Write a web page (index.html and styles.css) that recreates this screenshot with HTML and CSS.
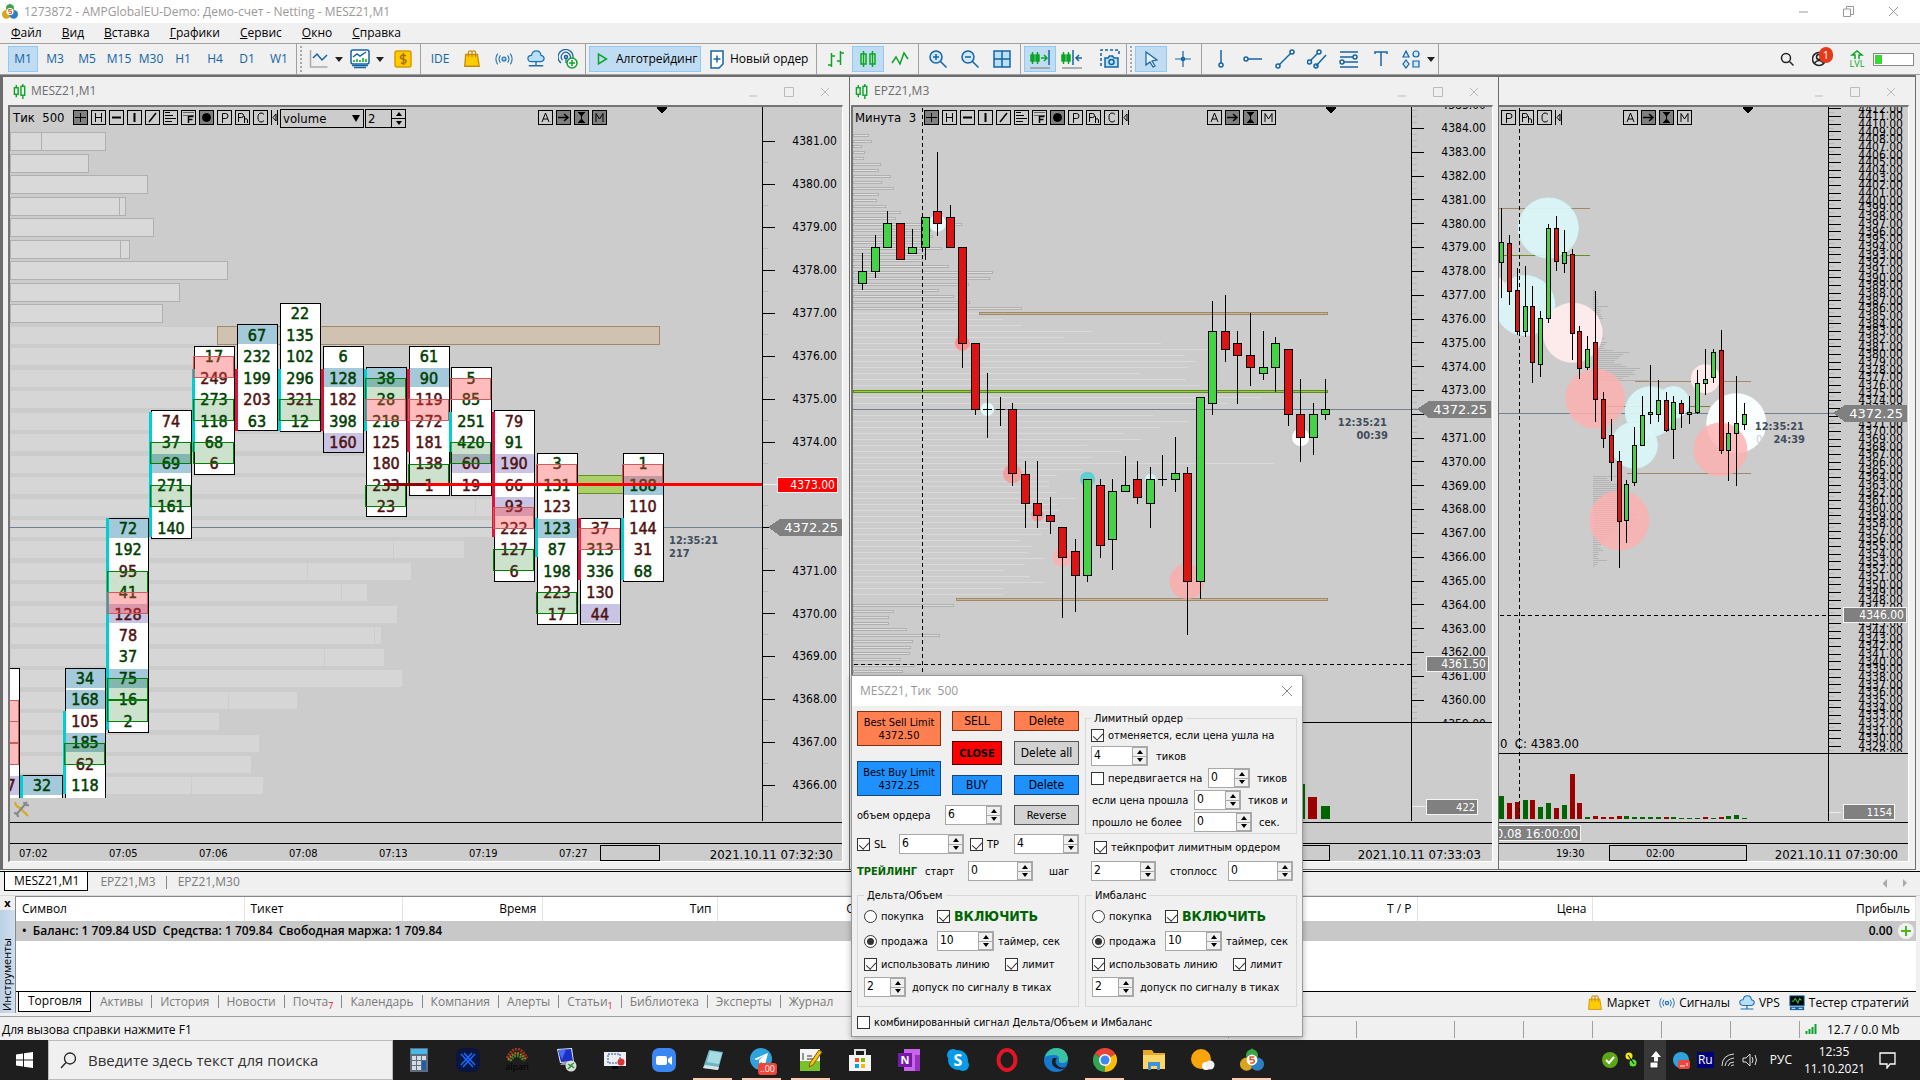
FILE: index.html
```html
<!DOCTYPE html>
<html lang="ru">
<head>
<meta charset="utf-8">
<title>1273872 - AMPGlobalEU-Demo</title>
<link rel="stylesheet" href="styles.css">
</head>
<body>
<svg class="defs" aria-hidden="true">
  <symbol id="i-mt" viewBox="0 0 20 20"><path d="M10 0l3 4h-6z" fill="#2e9b3e"/><circle cx="10" cy="6" r="5" fill="#3aa548"/><circle cx="5.500" cy="13.500" r="5.500" fill="#d9a520"/><circle cx="14.500" cy="13.500" r="5.500" fill="#2f7fc4"/><circle cx="10" cy="10" r="4.500" fill="#fff"/><path d="M12 7.500H8.500v2.200q3.500-.6 3.500 1.400 0 1.800-3.500 1.200" fill="none" stroke="#e0591c" stroke-width="1.300"/></symbol>
  <symbol id="i-candles" viewBox="0 0 16 16"><g fill="none" stroke="#0aa528" stroke-width="1.500"><path d="M3.500 1v3M3.500 11v3M10.500 0v2M10.500 12v4"/><rect x="1.500" y="4" width="4" height="7"/><rect x="8.500" y="2.500" width="4" height="9.500"/></g></symbol>
  <symbol id="i-bag" viewBox="0 0 20 20"><path d="M3 5h13l2 13H2z" fill="#fc0" stroke="#c78a00"/><path d="M6 8V3q0-2 2-2t2 2v5M10 8V3q0-2 2-2t2 2v5" fill="none" stroke="#c78a00" stroke-width="1.300"/></symbol>
  <symbol id="i-sig" viewBox="0 0 20 20"><circle cx="10" cy="10" r="2.200" fill="#9bd0f5" stroke="#1f6fb2" stroke-width="1.300"/><path d="M6 6q-3 4 0 8M14 6q3 4 0 8M3 4q-4 6 0 12M17 4q4 6 0 12" fill="none" stroke="#1f6fb2" stroke-width="1.200"/></symbol>
  <symbol id="i-cloud" viewBox="0 0 20 20"><path d="M5 13q-4 0-4-3.500T5 6q1-5 5.500-5T15.500 6q3.500.5 3.500 3.500T15.500 13z" fill="#b8e0fa" stroke="#1f6fb2" stroke-width="1.300"/><path d="M10 13v4M2 17.500h16" stroke="#1f6fb2" stroke-width="1.500"/></symbol>
  <symbol id="i-tester" viewBox="0 0 18 18"><rect x="1" y="1" width="16" height="11" fill="#000" stroke="#1464a5"/><path d="M3 7h2l2-3 3 5 2-5 2 2" fill="none" stroke="#28c840" stroke-width="1.200"/><rect x="1" y="13" width="16" height="4" fill="#1464a5"/><path d="M3 15h4M11 15h4" stroke="#fff"/></symbol>
</svg>

<header class="titlebar">
  <svg class="app-icon"><use href="#i-mt"/></svg>
  <span>1273872 - AMPGlobalEU-Demo: Демо-счет - Netting - MESZ21,M1</span>
  <div class="caption-buttons">
    <button aria-label="Свернуть"><svg width="12" height="12"><path d="M1 6h9"/></svg></button>
    <button aria-label="Восстановить"><svg width="12" height="12"><path d="M3.500 3V.5h7v8H8M.5 3h7v7.500h-7z"/></svg></button>
    <button aria-label="Закрыть"><svg width="12" height="12"><path d="M1 1l9 9M10 1l-9 9"/></svg></button>
  </div>
</header>
<nav class="menubar">
  <a href="#"><u>Ф</u>айл</a><a href="#"><u>В</u>ид</a><a href="#"><u>В</u>ставка</a><a href="#"><u>Г</u>рафики</a><a href="#"><u>С</u>ервис</a><a href="#"><u>О</u>кно</a><a href="#"><u>С</u>правка</a>
</nav>

<div class="toolbar">
  <div class="frames"><button class="on">M1</button><button>M3</button><button>M5</button><button>M15</button><button>M30</button><button>H1</button><button>H4</button><button>D1</button><button>W1</button></div>
  <i class="sep"></i><i class="grip"></i>
  <button class="tool wide" aria-label="График"><svg width="20" height="20"><path d="M1.500 1v17h17" stroke="#aaa"/><path d="M4 9l4-4 5 6 5-5"/></svg><i class="caret"></i></button>
  <button class="tool wide" aria-label="Индикаторы"><svg width="20" height="20"><rect x="1" y="1" width="18" height="14" rx="2" fill="#fff"/><path d="M3 8l4-3 3 2 6-4"/><path d="M4 13v-2M7 13v-3M10 13v-2M13 13v-4M16 13v-3" stroke="#0aa528"/><path d="M2 16.500h16M4 18.500h12"/></svg><i class="caret"></i></button>
  <button class="tool" aria-label="Баланс"><svg width="20" height="20"><rect x="2" y="2" width="16" height="16" rx="2" fill="#fc0" stroke="#d99a00"/><path d="M13 7q-3-2-5 0t2 3 3 3-5 1M10.500 4v12" stroke="#a86c00"/></svg></button>
  <i class="sep"></i>
  <button class="tool blue">IDE</button>
  <button class="tool" aria-label="Маркет"><svg width="18" height="18"><use href="#i-bag"/></svg></button>
  <button class="tool" aria-label="Сигналы"><svg width="18" height="18"><use href="#i-sig"/></svg></button>
  <button class="tool" aria-label="VPS"><svg width="18" height="18"><use href="#i-cloud"/></svg></button>
  <button class="tool" aria-label="Копирование"><svg width="20" height="20"><circle cx="8" cy="8" r="1.500"/><path d="M8 10v4M4.500 11a4.500 4.500 0 1 1 7-.5M3 14a7.500 7.500 0 1 1 12-5" stroke-width="1.200"/><circle cx="14" cy="14" r="5" fill="#fff" stroke="#0aa528"/><path d="M14 11v6M11 14h6" stroke="#0aa528"/></svg></button>
  <i class="sep"></i>
  <button class="labelled on algo"><svg width="12" height="14"><path d="M1.500 2v10l8-5z" stroke="#0aa528"/></svg>Алготрейдинг</button>
  <button class="labelled order"><svg width="15" height="19"><path d="M1 1h12v13l-4 4H1z" fill="#fff"/><path d="M3.500 9h7M7 5.500v7"/></svg>Новый ордер</button>
  <i class="sep"></i>
  <button class="tool" aria-label="Бары"><svg width="20" height="20"><path d="M5.500 4v14M2 16h3.500M5.500 7H9M14.500 2v14M11 12h3.500M14.500 4H18" stroke="#0aa528"/></svg></button>
  <button class="tool on" aria-label="Свечи"><svg width="20" height="20"><path d="M5.500 2v16M14.500 2v16M3 5h5v10H3zM12 5h5v10h-5z" stroke="#0aa528" fill="#cdeccf"/></svg></button>
  <button class="tool" aria-label="Линия"><svg width="20" height="20"><path d="M2 14l4-6 4 7 4-11 4 6" stroke="#0aa528"/></svg></button>
  <i class="sep"></i>
  <button class="tool" aria-label="Увеличить"><svg width="20" height="20"><circle cx="8" cy="8" r="6" fill="#cfe8fb"/><path d="M12.500 12.500l6 6M5 8h6M8 5v6"/></svg></button>
  <button class="tool" aria-label="Уменьшить"><svg width="20" height="20"><circle cx="8" cy="8" r="6" fill="#cfe8fb"/><path d="M12.500 12.500l6 6M5 8h6"/></svg></button>
  <button class="tool" aria-label="Сетка окон"><svg width="20" height="20"><path d="M2 2h16v16H2zM10 2v16M2 10h16" fill="#b8e0fa"/></svg></button>
  <i class="sep"></i>
  <button class="tool on" aria-label="Автопрокрутка"><svg width="22" height="20"><path d="M3.500 3v12M8.500 3v12M2 6h3v6H2zM7 6h3v6H7zM12 9h5M15 6l3 3-3 3" stroke="#0aa528"/><path d="M20 1v15"/><path d="M1 19h20" stroke="#999"/></svg></button>
  <button class="tool" aria-label="Сдвиг графика"><svg width="22" height="20"><path d="M2.500 3v12M7.500 3v12M1 6h3v6H1zM6 6h3v6H6z" stroke="#0aa528"/><path d="M12 1v15M21 9h-6M18 6l-3 3 3 3"/><path d="M1 19h20" stroke="#999"/></svg></button>
  <button class="tool shot" aria-label="Снимок"><svg width="20" height="20"><path d="M1 17V1h18v5" stroke-dasharray="3 2"/><path d="M5 9h3l1.500-2h3L14 9h4v9H5z" fill="#b8e0fa"/><circle cx="11.500" cy="13" r="2.500"/></svg></button>
  <i class="sep tight"></i><i class="grip"></i>
  <button class="tool on" aria-label="Курсор"><svg width="20" height="20"><path d="M5 3l11 8-5 1 3 5-2 1-3-5-4 3z" fill="#e6f4fe" stroke-width="1.200"/></svg></button>
  <button class="tool" aria-label="Перекрестие"><svg width="20" height="20"><path d="M10 2v16M2 10h16" stroke-width="1.200"/><circle cx="10" cy="10" r="1.500"/></svg></button>
  <i class="sep"></i>
  <button class="tool" aria-label="Вертикальная линия"><svg width="20" height="20"><path d="M10 1v13"/><circle cx="10" cy="16" r="2"/></svg></button>
  <button class="tool" aria-label="Горизонтальная линия"><svg width="20" height="20"><path d="M5 10h14"/><circle cx="3" cy="10" r="2"/></svg></button>
  <button class="tool" aria-label="Трендовая линия"><svg width="20" height="20"><path d="M4 16L16 4"/><circle cx="3" cy="17" r="2"/><circle cx="17" cy="3" r="2"/></svg></button>
  <button class="tool" aria-label="Канал"><svg width="20" height="20"><path d="M3 12l8-8M9 17L19 6"/><circle cx="2.500" cy="13" r="2"/><circle cx="12" cy="3" r="2"/><circle cx="9" cy="17" r="2"/></svg></button>
  <button class="tool" aria-label="Фибоначчи"><svg width="20" height="20"><path d="M1 3h18M1 8h13M5 13h14M1 18h18"/><circle cx="16" cy="8" r="2"/><circle cx="3" cy="13" r="2"/></svg></button>
  <button class="tool" aria-label="Текст"><svg width="20" height="20"><path d="M4 5V3h12v2M10 3v14"/></svg></button>
  <button class="tool wide" aria-label="Объекты"><svg width="20" height="20"><path d="M5 2l3 6H2zM5 11l3 4-3 4-3-4zM12 12h6v6h-6z" fill="#cfe8fb" stroke-width="1.200"/><circle cx="15" cy="5" r="3" fill="#cfe8fb" stroke-width="1.200"/></svg><i class="caret"></i></button>
  <i class="sep tight"></i>
  <div class="tool-right">
    <svg width="15" height="15"><path d="M9.500 9.500l4 4" stroke="#222"/><circle cx="6" cy="6" r="4.500" stroke="#222"/></svg>
    <span class="user"><svg width="16" height="16"><circle cx="7" cy="8" r="6.500" stroke="#222"/><circle cx="7" cy="6" r="2.500" stroke="#222"/><path d="M2.500 12q4.500-5 9 0" stroke="#222"/></svg><b>1</b></span>
    <span class="lvl"><svg width="14" height="10"><path d="M5 9V5H2l5-4 5 4H9v4" stroke="#0aa528"/></svg>LVL</span>
    <span class="battery"><i></i></span>
  </div>
</div>

<main class="mdi">
  <section class="win win1">
    <header><svg width="15" height="15"><use href="#i-candles"/></svg><span>MESZ21,M1</span><div class="win-buttons"><button aria-label="Свернуть"><svg width="10" height="10"><path d="M1 9h8"/></svg></button><button aria-label="Развернуть"><svg width="10" height="10"><path d="M.5.5h9v9h-9z"/></svg></button><button aria-label="Закрыть"><svg width="10" height="10"><path d="M1 1l8 8M9 1L1 9"/></svg></button></div></header>
    <div class="frame"><svg class="chart" id="chart1"></svg>
      <div class="tools"><span class="period">Тик&nbsp; 500</span><span class="set" data-set="all"></span>
        <label class="pick"><select aria-label="Тип"><option>volume</option></select></label>
        <span class="spin flat"><input aria-label="Шаг" value="2"><span><button aria-label="Больше"></button><button aria-label="Меньше"></button></span></span></div>
      <div class="tools modes" data-set="modes"></div></div>
  </section>
  <section class="win win2">
    <header><svg width="15" height="15"><use href="#i-candles"/></svg><span>EPZ21,M3</span><div class="win-buttons"><button aria-label="Свернуть"><svg width="10" height="10"><path d="M1 9h8"/></svg></button><button aria-label="Развернуть"><svg width="10" height="10"><path d="M.5.5h9v9h-9z"/></svg></button><button aria-label="Закрыть"><svg width="10" height="10"><path d="M1 1l8 8M9 1L1 9"/></svg></button></div></header>
    <div class="frame"><svg class="chart" id="chart2"></svg>
      <div class="tools"><span class="period">Минута&nbsp; 3</span><span class="set" data-set="all"></span></div>
      <div class="tools modes" data-set="modes"></div></div>
  </section>
  <section class="win win3">
    <header><div class="win-buttons"><button aria-label="Свернуть"><svg width="10" height="10"><path d="M1 9h8"/></svg></button><button aria-label="Развернуть"><svg width="10" height="10"><path d="M.5.5h9v9h-9z"/></svg></button><button aria-label="Закрыть"><svg width="10" height="10"><path d="M1 1l8 8M9 1L1 9"/></svg></button></div></header>
    <div class="frame"><svg class="chart" id="chart3"></svg>
      <div class="tools" data-set="tail"></div>
      <div class="tools modes" data-set="modes"></div></div>
  </section>
</main>

<nav class="doc-tabs"><a class="active" href="#">MESZ21,M1</a><a href="#">EPZ21,M3</a><a href="#">EPZ21,M30</a><span class="arrows"><i class="left"></i><i class="right"></i></span></nav>

<section class="toolbox">
  <div class="side"><button aria-label="Закрыть">x</button><span>Инструменты</span></div>
  <div class="pane">
    <table>
      <colgroup><col class="c-sym"><col class="c-tick"><col class="c-time"><col class="c-std"><col class="c-std"><col class="c-std"><col class="c-std"><col class="c-std"><col class="c-std"><col></colgroup>
      <thead><tr><th class="l">Символ</th><th class="l">Тикет</th><th>Время</th><th>Тип</th><th>Объем</th><th>Цена</th><th>S / L</th><th>T / P</th><th>Цена</th><th>Прибыль</th></tr></thead>
      <tbody><tr><td class="l" colspan="8">•&nbsp; Баланс: 1 709.84 USD&nbsp; Средства: 1 709.84&nbsp; Свободная маржа: 1 709.84</td><td></td><td><span class="profit">0.00<svg width="16" height="16"><circle cx="8" cy="8" r="8" fill="#f2f2f2"/><path d="M8 3v10M3 8h10" stroke="#4db81e" stroke-width="2"/></svg></span></td></tr></tbody>
    </table>
    <nav class="box-tabs">
      <a class="active" href="#">Торговля</a><a href="#">Активы</a><a href="#">История</a><a href="#">Новости</a><a href="#">Почта<sub>7</sub></a><a href="#">Календарь</a><a href="#">Компания</a><a href="#">Алерты</a><a href="#">Статьи<sub>1</sub></a><a href="#">Библиотека</a><a href="#">Эксперты</a><a href="#">Журнал</a>
      <span class="services"><a href="#"><svg width="16" height="16"><use href="#i-bag"/></svg>Маркет</a><a href="#"><svg width="16" height="16"><use href="#i-sig"/></svg>Сигналы</a><a href="#"><svg width="16" height="16"><use href="#i-cloud"/></svg>VPS</a><a href="#"><svg width="16" height="16"><use href="#i-tester"/></svg>Тестер стратегий</a></span>
    </nav>
  </div>
</section>

<footer class="status"><span class="help">Для вызова справки нажмите F1</span><i class="s1"></i><i class="s2"></i><i class="s3"></i><i class="s3"></i><i class="s3"></i><i class="s3"></i><i class="s3"></i><span class="net"><svg width="14" height="14"><path d="M1.500 10v3M4.500 8v5M7.500 6v7M10.500 3v10" stroke="#0aa528" stroke-width="2"/></svg>12.7 / 0.0 Mb</span></footer>

<section class="taskbar">
  <button class="start" aria-label="Пуск"><svg width="17" height="16"><path d="M0 2.500l7-1v6H0zM8 1.300L17 0v7.500H8zM0 8.500h7v6l-7-1zM8 8.500h9V16l-9-1.300z" fill="#fff"/></svg></button>
  <label class="search"><svg width="17" height="17"><circle cx="10" cy="6.500" r="5.500" fill="none" stroke="#222" stroke-width="1.300"/><path d="M6 10.500L1 16" stroke="#222" stroke-width="1.300"/></svg><input aria-label="Поиск" placeholder="Введите здесь текст для поиска"></label>
  <div class="apps">
    <button aria-label="Калькулятор"><svg width="24" height="24"><rect x="3" y="0" width="18" height="24" fill="#5f6d7c"/><rect x="4" y="1" width="16" height="5" fill="#45b9ea"/><path d="M5 8h4v4H5zM10 8h4v4h-4zM15 8h4v4h-4zM5 13h4v4H5zM10 13h4v4h-4zM5 18h4v4H5zM10 18h4v4h-4z" fill="#d5dce4"/><path d="M15 13h4v9h-4z" fill="#1d5fa8"/></svg></button>
    <button aria-label="X"><svg width="24" height="24"><rect width="24" height="24" rx="7" fill="#0a1640"/><path d="M5 6l12 13M19 6L7 19M8 5l11 12M16 5L5 17" stroke="#1769ff" stroke-width="1.500"/></svg></button>
    <button aria-label="Alpari"><svg width="26" height="24"><path d="M3 10Q13-8 23 10" fill="none" stroke="#a03325" stroke-width="3" stroke-dasharray="2 1"/><path d="M4 12Q13-2 22 12" fill="none" stroke="#b0701c" stroke-width="2" stroke-dasharray="2 1"/><path d="M6 13Q13 2 20 13" fill="none" stroke="#4a8428" stroke-width="3" stroke-dasharray="2 1"/><text x="13" y="22" font-size="9" text-anchor="middle" fill="#000">alpari</text></svg></button>
    <button aria-label="Удаленный рабочий стол"><svg width="24" height="24"><path d="M3 1l15-1 2 14-14 1z" fill="#dfe6ee"/><path d="M4 2l13-1 2 12-12 1z" fill="#1732c4"/><path d="M4 2l8-.5-4 10z" fill="#4a6cf0"/><path d="M8 15l8-1 1 3H6z" fill="#999"/><circle cx="17" cy="18" r="5.500" fill="#ddd"/><path d="M14 16l3 2-3 3M20 15l-3 2 3 3" stroke="#2b9a38" stroke-width="1.500" fill="none"/></svg></button>
    <button aria-label="Запись экрана"><svg width="24" height="24"><rect x="1" y="4" width="22" height="14" fill="#eceff2"/><rect x="5" y="6" width="12" height="9" fill="none" stroke="#2748b8" stroke-dasharray="2 1"/><circle cx="18" cy="14" r="3.500" fill="#e03131"/><path d="M9 18h6v3H9z" fill="#050505"/></svg></button>
    <button aria-label="Zoom"><svg width="24" height="24"><rect width="24" height="24" rx="7" fill="#3a86f2"/><rect x="4" y="8" width="11" height="9" rx="2" fill="#fff"/><path d="M16 11l4-3v9l-4-3z" fill="#fff"/></svg></button>
    <button class="open" aria-label="Блокнот"><svg width="24" height="24"><path d="M8 2l14 2-5 18-15-2z" fill="#6fb4c4"/><path d="M9 3l12 2-3 11-12-2z" fill="#a6dbe2"/><path d="M2 20l15 2 1-3-14-2z" fill="#d9e4e6"/></svg></button>
    <button class="open tg" aria-label="Telegram"><svg width="26" height="26"><circle cx="12" cy="12" r="11" fill="#2ea3dd"/><path d="M5 12l14-6-3 12-4-3-2 2v-4l6-5-8 5z" fill="#fff"/></svg><b>..00</b></button>
    <button class="open" aria-label="Notepad++"><svg width="24" height="24"><rect x="1" y="1" width="20" height="22" fill="#f5f5f5"/><path d="M1 13h20v10H1z" fill="#79c229"/><path d="M4 5v7M8 8h5M8 11h8" stroke="#333"/><path d="M11 15L20 2l3 2-9 13-4 2z" fill="#f3c11b" stroke="#8a5a00"/></svg></button>
    <button aria-label="Магазин"><svg width="24" height="24"><path d="M1 7h22v16H1z" fill="#f5f5f5"/><path d="M7 7V2h10v5" fill="none" stroke="#ddd" stroke-width="2"/><path d="M7 10h4v4H7z" fill="#f25022"/><path d="M13 10h4v4h-4z" fill="#7fba00"/><path d="M7 16h4v4H7z" fill="#00a4ef"/><path d="M13 16h4v4h-4z" fill="#ffb900"/></svg></button>
    <button aria-label="OneNote"><svg width="24" height="24"><path d="M7 1h16v22H7z" fill="#ca64ea"/><path d="M18 7h5v16h-5z" fill="#9332bf"/><rect x="1" y="5" width="14" height="14" fill="#7719aa"/><text x="8" y="16" font-size="11" font-weight="700" text-anchor="middle" fill="#fff">N</text></svg></button>
    <button aria-label="Skype"><svg width="24" height="24"><circle cx="12" cy="12" r="10" fill="#0a9be8"/><circle cx="7" cy="7" r="6" fill="#0a9be8"/><circle cx="17" cy="17" r="6" fill="#0a9be8"/><text x="12" y="18" font-size="16" font-weight="700" text-anchor="middle" fill="#fff">S</text></svg></button>
    <button aria-label="Opera"><svg width="24" height="24"><ellipse cx="12" cy="12" rx="8.500" ry="10" fill="none" stroke="#e01525" stroke-width="4"/></svg></button>
    <button aria-label="Edge"><svg width="24" height="24"><circle cx="12" cy="12" r="12" fill="#1479cf"/><path d="M1 9Q4 0 13 0t11 10q0 5-6 5-4 0-3-3 1-5-5-5-6 0-9 2z" fill="#39c3a4"/><path d="M9 10q-4 8 6 11 4 1 7-2-6 2-9-2-3-3 0-7z" fill="#1e1e1e"/></svg></button>
    <button class="open" aria-label="Chrome"><svg width="24" height="24"><path d="M12 12L1.600 6A12 12 0 0 1 22.400 6z" fill="#e94335"/><path d="M12 12V24A12 12 0 0 1 1.600 6z" fill="#34a353"/><path d="M12 12L22.400 6A12 12 0 0 1 12 24z" fill="#fbbc05"/><circle cx="12" cy="12" r="6" fill="#fff"/><circle cx="12" cy="12" r="4.500" fill="#4285f4"/></svg></button>
    <button aria-label="Проводник"><svg width="24" height="24"><path d="M1 2h9l2 3h11v16H1z" fill="#e8a82a"/><path d="M1 7h22v14H1z" fill="#fcd667"/><path d="M6 14h12v8h-3v-4H9v4H6z" fill="#3e91d8"/></svg></button>
    <button aria-label="Погода"><svg width="24" height="24"><circle cx="10" cy="11" r="10" fill="#f9a40a"/><circle cx="15" cy="18" r="4" fill="#fff"/><circle cx="19" cy="17" r="4.500" fill="#f2f2f2"/></svg></button>
    <button class="open" aria-label="MetaTrader"><svg width="24" height="24"><use href="#i-mt"/></svg></button>
  </div>
  <div class="tray">
    <svg width="16" height="16"><circle cx="8" cy="8" r="8" fill="#5da617"/><path d="M4 8l3 3 5-6" stroke="#fff" stroke-width="2" fill="none"/></svg>
    <svg width="12" height="16"><circle cx="4" cy="4" r="3.500" fill="#f4e715"/><circle cx="8" cy="11" r="3.500" fill="#5ae32c"/><path d="M3 3l6 9" stroke="#000"/></svg>
    <span class="hot"><svg width="16" height="18"><path d="M9 0l5 6h-3v7H7V6H4z" fill="#fff"/><rect x="3" y="11" width="8" height="6" fill="#fff" stroke="#222"/></svg></span>
    <svg width="17" height="17"><circle cx="8" cy="8" r="8" fill="#2ea3dd"/><rect x="5" y="8" width="12" height="9" rx="2" fill="#f0453a"/><path d="M7 14h5M14 11v3" stroke="#fff"/></svg>
    <b class="kbd">Ru</b>
    <svg width="14" height="14"><path d="M1 13Q1 2 13 1M4 13q1-7 9-8M7 13q1-4 6-4M10 13q1-1 3-1" stroke="#ddd" fill="none"/></svg>
    <svg width="16" height="14"><path d="M1 5h3l4-4v12L4 9H1zM10 4q2 3 0 6M13 2q3 5 0 10" stroke="#ddd" fill="none"/></svg>
    <span class="lang">РУС</span>
    <time>12:35<br>11.10.2021</time>
    <svg class="note" width="17" height="17"><path d="M1 1h15v11h-5l-3 4v-4H1z" stroke="#fff" fill="none" stroke-width="1.300"/></svg>
  </div>
</section>

<form class="dialog">
  <header>MESZ21, Тик&nbsp; 500<button type="button" aria-label="Закрыть"><svg width="12" height="12"><path d="M1 1l10 10M11 1L1 11" stroke="#888"/></svg></button></header>
  <div class="body">
    <div class="pair">
      <div class="left">
        <div class="deal">
          <div class="best"><button type="button" class="sell">Best Sell Limit<br>4372.50</button><button type="button" class="buy">Best Buy Limit<br>4372.25</button></div>
          <div class="acts"><button type="button" class="sell">SELL</button><button type="button" class="close">CLOSE</button><button type="button" class="buy">BUY</button></div>
          <div class="acts"><button type="button" class="sell">Delete</button><button type="button" class="plain">Delete all</button><button type="button" class="buy">Delete</button></div>
        </div>
        <div class="row r-vol"><label for="vol">объем ордера</label><span class="spin"><input id="vol" value="6"><span><button type="button" aria-label="Больше"></button><button type="button" aria-label="Меньше"></button></span></span><i></i><button type="button" class="plain">Reverse</button></div>
        <div class="row r-sl"><input type="checkbox" id="sl" checked><label for="sl">SL</label><span class="spin"><input aria-label="SL" value="6"><span><button type="button" aria-label="Больше"></button><button type="button" aria-label="Меньше"></button></span></span><i></i><input type="checkbox" id="tp" checked><label for="tp">TP</label><span class="spin"><input aria-label="TP" value="4"><span><button type="button" aria-label="Больше"></button><button type="button" aria-label="Меньше"></button></span></span></div>
      </div>
      <div class="right">
        <fieldset class="limit"><legend>Лимитный ордер</legend>
          <div class="row r-one"><input type="checkbox" id="cancel" checked><label for="cancel">отменяется, если цена ушла на</label></div>
          <div class="row r-two"><span class="spin"><input id="t1" value="4"><span><button type="button" aria-label="Больше"></button><button type="button" aria-label="Меньше"></button></span></span><label for="t1">тиков</label></div>
          <div class="row r-three"><input type="checkbox" id="mv"><label for="mv">передвигается на</label><span class="spin"><input id="t2" value="0"><span><button type="button" aria-label="Больше"></button><button type="button" aria-label="Меньше"></button></span></span><label for="t2">тиков</label></div>
          <div class="row r-four"><label for="t3">если цена прошла</label><span class="spin"><input id="t3" value="0"><span><button type="button" aria-label="Больше"></button><button type="button" aria-label="Меньше"></button></span></span><label for="t3">тиков и</label></div>
          <div class="row r-five"><label for="t4">прошло не более</label><span class="spin"><input id="t4" value="0"><span><button type="button" aria-label="Больше"></button><button type="button" aria-label="Меньше"></button></span></span><label for="t4">сек.</label></div>
        </fieldset>
        <div class="row r-one take"><input type="checkbox" id="take" checked><label for="take">тейкпрофит лимитным ордером</label></div>
      </div>
    </div>
    <div class="row r-trail"><b>ТРЕЙЛИНГ</b><label for="st">старт</label><span class="spin"><input id="st" value="0"><span><button type="button" aria-label="Больше"></button><button type="button" aria-label="Меньше"></button></span></span><label class="step" for="sh">шаг</label><span class="spin"><input id="sh" value="2"><span><button type="button" aria-label="Больше"></button><button type="button" aria-label="Меньше"></button></span></span><label class="stop" for="sp">стоплосс</label><span class="spin"><input id="sp" value="0"><span><button type="button" aria-label="Больше"></button><button type="button" aria-label="Меньше"></button></span></span></div>
    <div class="pair signals">
      <fieldset><legend>Дельта/Объем</legend>
        <div class="row g"><input type="radio" name="d" id="d1"><label for="d1">покупка</label><input type="checkbox" id="d3" checked><label class="enable" for="d3">ВКЛЮЧИТЬ</label></div>
        <div class="row g timer"><input type="radio" name="d" id="d2" checked><label for="d2">продажа</label><span class="spin"><input id="d4" value="10"><span><button type="button" aria-label="Больше"></button><button type="button" aria-label="Меньше"></button></span></span><label for="d4">таймер, сек</label></div>
        <div class="row g line"><input type="checkbox" id="d5" checked><label for="d5">использовать линию</label><input type="checkbox" id="d6" checked><label for="d6">лимит</label></div>
        <div class="row g tol"><span class="spin"><input id="d7" value="2"><span><button type="button" aria-label="Больше"></button><button type="button" aria-label="Меньше"></button></span></span><label for="d7">допуск по сигналу в тиках</label></div>
      </fieldset>
      <fieldset><legend>Имбаланс</legend>
        <div class="row g"><input type="radio" name="m" id="m1"><label for="m1">покупка</label><input type="checkbox" id="m3" checked><label class="enable" for="m3">ВКЛЮЧИТЬ</label></div>
        <div class="row g timer"><input type="radio" name="m" id="m2" checked><label for="m2">продажа</label><span class="spin"><input id="m4" value="10"><span><button type="button" aria-label="Больше"></button><button type="button" aria-label="Меньше"></button></span></span><label for="m4">таймер, сек</label></div>
        <div class="row g line"><input type="checkbox" id="m5" checked><label for="m5">использовать линию</label><input type="checkbox" id="m6" checked><label for="m6">лимит</label></div>
        <div class="row g tol"><span class="spin"><input id="m7" value="2"><span><button type="button" aria-label="Больше"></button><button type="button" aria-label="Меньше"></button></span></span><label for="m7">допуск по сигналу в тиках</label></div>
      </fieldset>
    </div>
    <div class="row r-one combo"><input type="checkbox" id="combo"><label for="combo">комбинированный сигнал Дельта/Объем и Имбаланс</label></div>
  </div>
</form>
<script src="charts.js"></script>
</body>
</html>
```
FILE: styles.css
```css
* { box-sizing: border-box; }
body { margin: 0; min-height: 100vh; display: flex; flex-direction: column; position: relative; overflow: hidden; background: #f0f0f0; color: #000; font: 12px/16px "Open Sans", "Noto Sans", sans-serif; }
button, input, select { font: inherit; color: inherit; margin: 0; padding: 0; border: 0; background: none; border-radius: 0; }
a { color: inherit; text-decoration: none; }
svg { display: block; flex: none; }
i { font-style: normal; }
.defs { position: absolute; width: 0; height: 0; }

.titlebar { height: 23px; background: #fff; color: #999; display: flex; align-items: center; padding: 0 4px 0 2px; }
.app-icon { width: 16px; height: 17px; margin-right: 6px; }
.caption-buttons { margin-left: auto; display: flex; }
.caption-buttons button { width: 45px; display: flex; justify-content: center; }
.caption-buttons svg, .win-buttons svg { fill: none; stroke: #999; }
.menubar { height: 20px; display: flex; gap: 20px; padding: 1px 11px; line-height: 18px; }
.toolbar { height: 32px; border-top: 1px solid #a0a0a0; border-bottom: 1px solid #a0a0a0; display: flex; align-items: center; padding-left: 8px; }
.frames { display: flex; gap: 2px; margin-right: 1px; color: #1464a5; }
.frames button { width: 30px; height: 26px; border: 1px solid transparent; }
.toolbar .on { background: #c0dcf3; border: 1px solid #90c8f6; }
.sep { width: 1px; height: 30px; background: #a0a0a0; margin: 0 3px 0 1px; }
.order ~ .sep { margin-left: 2px; }
.order ~ .sep.tight { margin-left: 0; }
.grip { width: 2px; height: 26px; margin-right: 3px; background: repeating-linear-gradient(#a8a8a8 0 2px, transparent 2px 4px); }
.tool { width: 32px; height: 26px; display: flex; align-items: center; justify-content: center; gap: 6px; }
.tool svg, .labelled svg, .tool-right svg { fill: none; stroke: #1464a5; stroke-width: 1.5px; }
.tool.wide { width: 41px; }
.tool.blue { color: #1464a5; }
.tool.shot { margin-left: 6px; }
.caret { border: 4px solid transparent; border-top: 5px solid #222; border-bottom: 0; }
.labelled { height: 26px; display: flex; align-items: center; gap: 7px; border: 1px solid transparent; }
.algo { width: 112px; padding-left: 7px; }
.order { width: 113px; padding-left: 8px; gap: 5px; }
.tool-right { margin-left: auto; display: flex; align-items: center; padding-right: 6px; }
.user { position: relative; margin: 0 15px 0 17px; width: 21px; }
.user b { position: absolute; right: 0; top: -4px; width: 14px; height: 16px; border-radius: 8px; background: #e63917; color: #fff; font-weight: 400; text-align: center; line-height: 15px; font-size: 11px; }
.lvl { width: 18px; margin-right: 7px; color: #0aa528; font-size: 9px; line-height: 8px; display: flex; flex-direction: column; align-items: center; }
.battery { width: 41px; height: 13px; border: 1px solid #888; background: #fff; padding: 1px; }
.battery i { display: block; width: 7px; height: 9px; background: #3ad63a; }

.mdi { flex: 1; display: grid; grid-template-columns: 847fr 648fr 418fr; border: solid #6d6d6d; border-width: 2px 0 1px 3px; margin-right: 4px; }
.win { display: flex; flex-direction: column; border-right: 1px solid #6d6d6d; min-width: 0; padding: 0 6px 7px 5px; }
.win header { height: 28px; display: flex; align-items: center; color: #6d6d6d; padding-left: 5px; }
.win header span { margin-left: 3px; }
.win-buttons { margin-left: auto; display: flex; padding-top: 2px; }
.win-buttons button { width: 36px; display: flex; justify-content: center; }
.win-buttons svg { stroke: #bbb; }
.win2 { padding-left: 1px; padding-right: 5px; border-right: 0; }
.win2 header { padding: 0 1px 0 4px; }
.win2 header span { margin-left: 4px; }
.win3 { padding-left: 0; padding-right: 6px; border-left: 1px solid #6d6d6d; }
.frame { flex: 1; position: relative; background: #ccc; border: 1px solid #fff; border-top: 2px solid #757575; border-left: 2px solid #757575; overflow: hidden; }
.win3 .frame { border-left: 0; }
.chart { width: 100%; height: 100%; position: absolute; inset: 0; font-family: "DejaVu Sans Condensed", "DejaVu Sans", sans-serif; shape-rendering: crispEdges; }
.tools { position: absolute; top: 3px; left: 3px; display: flex; gap: 3px; align-items: flex-start; font: 13px/16px "DejaVu Sans Condensed", "DejaVu Sans", sans-serif; }
.tools .period { width: 57px; white-space: nowrap; }
.win2 .period { width: 66px; }
.win3 .tools, .win2 .tools { left: 2px; }
.tools.modes { left: auto; right: 235px; }
.win2 .tools.modes, .win3 .tools.modes { left: auto; right: 216px; }
.set { display: flex; gap: 3px; }
.tools button.tb { width: 15px; height: 15px; border: 1px solid #000; }
.tools button.tb svg { width: 13px; height: 13px; fill: none; stroke: #000; }
.tools button.dark { background: #808080; }
.tools button.half { width: 7px; height: 15px; border: solid #000; border-width: 0 1px; }
.tools button.half svg { width: 5px; height: 13px; }
.pick { position: relative; width: 84px; height: 19px; margin: -1px -2px 0 -1px; }
.pick select { appearance: none; width: 84px; height: 19px; border: 1px solid #000; padding-left: 2px; }
.pick::after { content: ""; position: absolute; right: 4px; top: 6px; border: 4px solid transparent; border-top: 7px solid #000; border-bottom: 0; }

.spin { display: flex; height: 20px; background: #fff; border: 1px solid #a8a8a8; min-width: 0; }
.spin input { flex: 1; min-width: 0; width: 0; padding: 0 0 2px 2px; font-size: 12px; }
.spin > span { width: 15px; display: flex; flex-direction: column; gap: 1px; background: #a8a8a8; padding: 1px; }
.spin button { flex: 1; background: #f0f0f0; display: flex; align-items: center; justify-content: center; }
.spin button::after { content: ""; border: 3px solid transparent; border-bottom: 4px solid #000; border-top: 0; }
.spin button + button::after { border-top: 4px solid #000; border-bottom: 0; }
.spin.flat { width: 41px; height: 19px; background: none; border-color: #000; margin-top: -1px; }
.spin.flat > span { background: #000; padding: 0 0 0 1px; width: 14px; }
.spin.flat input { padding: 0 0 0 2px; font-size: 13px; }
.spin.flat button { background: #ccc; }

.doc-tabs { height: 25px; margin-top: 1px; border-top: 1px solid #000; display: flex; color: #7a7a7a; border-bottom: 1px solid #d8d8d8; background: #f0f0f0; }
.doc-tabs a { padding: 2px 10px 0 12px; height: 19px; position: relative; }
.doc-tabs a + a + a::before { content: ""; position: absolute; left: 0; top: 4px; height: 13px; border-left: 1px solid #888; }
.doc-tabs .active { background: #fff; color: #000; border: 1px solid #000; border-top: 0; margin: 0 0 0 4px; padding: 1px 8px 0 9px; }
.arrows { margin-left: auto; display: flex; gap: 16px; padding: 7px 9px 0 0; }
.arrows i { border: 4px solid transparent; height: 0; }
.arrows .left { border-right-color: #aaa; }
.arrows .right { border-left-color: #aaa; }

.toolbox { display: flex; margin: 0 4px 3px 0; height: 117px; }
.side { width: 15px; display: flex; flex-direction: column; }
.side button { height: 14px; font: 700 11px/10px "Open Sans", sans-serif; }
.side span { flex: 1; writing-mode: vertical-rl; transform: rotate(180deg); background: linear-gradient(90deg, #cfdfee, #bcd0e4); font-size: 11px; line-height: 14px; padding-top: 2px; }
.pane { flex: 1; border-top: 1px solid #888; border-left: 1px solid #888; background: #fff; display: flex; flex-direction: column; justify-content: space-between; min-width: 0; }
table { border-collapse: collapse; table-layout: fixed; width: 100%; }
.c-sym { width: 228px; } .c-tick { width: 158px; } .c-time { width: 140px; } .c-std { width: 175px; }
th, td { text-align: right; padding: 0 5px; white-space: nowrap; overflow: hidden; }
th { height: 24px; font-weight: 400; border-right: 1px solid #e3e3e3; }
td { height: 20px; background: #c8c8c8; font-weight: 600; }
th.l, td.l { text-align: left; padding-left: 6px; }
.profit { display: flex; gap: 5px; justify-content: flex-end; align-items: center; margin-right: -3px; }
.box-tabs { height: 22px; border-top: 1px solid #000; background: #f0f0f0; display: flex; color: #7a7a7a; padding-left: 2px; }
.box-tabs > a { padding: 2px 8px 0 9px; height: 20px; position: relative; }
.box-tabs > a + a + a::before { content: ""; position: absolute; left: 0; top: 3px; height: 13px; border-left: 1px solid #888; }
.box-tabs .active { background: #fff; color: #000; border: 1px solid #000; border-top: 0; padding: 1px 8px 0 9px; }
.box-tabs sub { color: #e81123; font-size: 9px; line-height: 0; }
.services { margin-left: auto; display: flex; gap: 9px; padding: 2px 7px 0 0; color: #000; }
.services a { display: flex; gap: 4px; align-items: center; height: 18px; }

.status { height: 24px; border-top: 1px solid #a0a0a0; display: flex; padding: 4px 0 2px 2px; line-height: 18px; }
.status i { border-left: 1px solid #a0a0a0; }
.status .help { flex: 1; }
.s1 { width: 128px; } .s2 { width: 98px; } .s3 { width: 69px; }
.net { border-left: 1px solid #a0a0a0; width: 121px; display: flex; gap: 8px; padding-left: 5px; }

.taskbar { height: 40px; background: #1e1e1e; display: flex; color: #fff; }
.start { width: 48px; display: flex; align-items: center; padding-left: 16px; }
.search { width: 345px; background: #f0f0f0; border: 1px solid #bbb; display: flex; align-items: center; gap: 11px; padding-left: 11px; }
.search input { flex: 1; font-size: 15px; min-width: 0; }
.search input::placeholder { color: #333; opacity: 1; }
.apps { display: flex; padding-left: 1px; }
.apps button { width: 49px; display: flex; align-items: center; justify-content: center; font-family: "Open Sans", sans-serif; }
.apps .open { box-shadow: inset 5px 0 #1e1e1e, inset -5px 0 #1e1e1e, inset 0 -2px #fbcbb0; }
.tg { position: relative; }
.tg b { position: absolute; right: 9px; bottom: 5px; background: #f0453a; border-radius: 3px; font: 9px/12px "Open Sans", sans-serif; padding: 0 2px; }
.tray { margin-left: auto; display: flex; align-items: center; gap: 7px; padding-right: 24px; }
.hot { width: 22px; height: 40px; background: #383838; display: flex; align-items: center; justify-content: center; }
.kbd { background: #000078; width: 17px; text-align: center; font-weight: 400; }
.lang { margin: 0 5px; }
.tray time { text-align: center; width: 60px; line-height: 17px; margin-right: 8px; }

.dialog { position: absolute; left: 851px; top: 675px; width: 452px; background: #f0f0f0; border: 1px solid #999; box-shadow: 0 2px 6px rgba(0,0,0,.3); font: 11px/13px "DejaVu Sans Condensed", "DejaVu Sans", sans-serif; }
.dialog > header { height: 30px; background: #fff; color: #999; font: 12px/28px "Open Sans", sans-serif; padding: 0 9px 0 8px; display: flex; justify-content: space-between; align-items: center; }
.body { padding: 4px 5px 7px 5px; }
.pair { display: grid; grid-template-columns: 222px 212px; gap: 6px; }
.left { padding-top: 1px; }
.deal { display: grid; grid-template-columns: 84px 50px 65px; column-gap: 11px; }
.best, .acts { display: flex; flex-direction: column; }
.best { gap: 15px; }
.acts { gap: 10px; }
.acts + .acts { margin-left: 1px; width: 65px; }
.best button { height: 35px; }
.acts button { height: 20px; font-size: 12px; }
.acts button:nth-child(2) { height: 24px; }
.dialog .sell { background: #ff7f50; border: 1px solid #7f3010; }
.dialog .buy { background: #1e90ff; border: 1px solid #104880; }
.dialog .close { background: #f00; border: 1px solid #500; font-weight: 700; font-size: 11px; }
.dialog .plain { background: #d3d3d3; border: 1px solid #555; }
.row { display: grid; align-items: center; }
.row label { white-space: nowrap; padding-left: 4px; }
.r-vol { grid-template-columns: 88px 57px 12px 65px; margin-top: 9px; }
.r-vol label { padding-left: 0; }
.r-vol .plain { height: 20px; }
.r-sl { grid-template-columns: 13px 29px 65px 6px 13px 31px 65px; margin-top: 9px; }
.r-one { grid-template-columns: 13px 1fr; height: 13px; }
.take { margin: 7px 0 0 9px; }
.r-trail { grid-template-columns: 68px 43px 65px 58px 65px 72px 65px; margin-top: 7px; }
.r-trail label { padding-left: 0; }
.r-trail .step { padding-left: 16px; }
.r-trail .stop { padding-left: 14px; }
.r-trail b, .enable { color: #006400; font-weight: 700; }
.row .enable { font-size: 14px; }
fieldset { margin: 0; padding: 0 0 0 5px; border: 1px solid #d8d8d8; min-width: 0; }
legend { padding: 2px 3px 0; line-height: 14px; }
.limit { padding: 3px 0 1px 5px; }
.limit .r-one { margin-bottom: 4px; }
.limit .row + .row + .row { margin-top: 2px; }
.r-two { grid-template-columns: 57px 1fr; }
.r-two label { padding-left: 8px; }
.r-three { grid-template-columns: 13px 104px 42px 1fr; }
.r-three label:last-child { padding-left: 7px; }
.r-four { grid-template-columns: 103px 47px 1fr; }
.r-five { grid-template-columns: 103px 58px 1fr; }
.r-four label:first-child, .r-five label:first-child { padding-left: 1px; }
.r-five label:last-child, .r-four label:last-child { padding-left: 7px; }
.signals { margin-top: 6px; }
.signals fieldset { padding: 7px 0 9px 6px; }
.g { grid-template-columns: 13px 60px 13px 1fr; height: 13px; }
.timer { grid-template-columns: 13px 60px 57px 1fr; height: 20px; margin: 8px 0 7px; }
.line { grid-template-columns: 13px 128px 13px 1fr; }
.tol { grid-template-columns: 42px 1fr; height: 20px; margin-top: 6px; }
.tol label { padding-left: 6px; }
.combo { margin-top: 9px; }
.dialog input[type=checkbox], .dialog input[type=radio] { appearance: none; width: 13px; height: 13px; border: 1px solid #333; background: #fff; display: block; position: relative; }
.dialog input[type=radio] { border-radius: 50%; }
.dialog input[type=checkbox]:checked::after { content: ""; position: absolute; left: 3px; top: 1px; width: 5px; height: 8px; border: solid #333; border-width: 0 1px 1px 0; transform: rotate(42deg); }
.dialog input[type=radio]:checked::after { content: ""; position: absolute; left: 2px; top: 2px; width: 7px; height: 7px; border-radius: 50%; background: #333; }
```
FILE: charts.js
```js
// Small buttons on top of every chart.
const GLYPHS = {
  plus: ['dark', '<path d="M1 6.500h11M6.500 2v9"/>'],
  h: ['', '<path d="M3.500 2v9M9.500 2v9M3 6.500h7"/>'],
  hor: ['', '<path d="M2 6.500h9" stroke-width="2"/>'],
  ver: ['', '<path d="M6.500 2v9" stroke-width="2"/>'],
  diag: ['', '<path d="M3 11L10 2" stroke-width="1.500"/>'],
  prof: ['', '<path d="M1 1.500h5M1 4.500h8M1 7.500h11M1 10.500h7"/>'],
  fprof: ['', '<path d="M1 1.500h11M1 4.500h11" stroke="#666"/><path d="M6.500 12V5.500h5M6.500 8.500h4" stroke-width="1.500"/>'],
  dot: ['dark', '<circle cx="6.500" cy="6.500" r="4" fill="#000"/>'],
  p: ['', '<path d="M4.500 12V2.500h3q2.500 0 2.500 2.500t-2.500 2.500h-3"/>'],
  ph: ['', '<path d="M2.500 11V2.500h3q2 0 2 2t-2 2h-3M8.500 5v7M8.500 8q3-1 3 1v3"/>'],
  c: ['', '<path d="M10 3.500q-1-1.500-3-1.500-3 0-3 4.500t3 4.500q2 0 3-1.500"/>'],
  half: ['half', '<path d="M4 3v7L1 6.500z" />'],
  a: ['', '<path d="M3 11l3.500-9L10 11M4 8h5"/>'],
  go: ['dark', '<path d="M1 6.500h10M7 3l4 3.500L7 10" stroke-width="1.500"/>'],
  fit: ['dark', '<path d="M3 1.500h7M3 11.500h7M6.500 2v9" /><path d="M4 2h5l-2.500 3zM4 11h5l-2.500-3z" fill="#000"/>'],
  m: ['', '<path d="M3 11V2.500L6.500 8 10 2.500V11"/>']
};
const SETS = {
  all: ['plus', 'h', 'hor', 'ver', 'diag', 'prof', 'fprof', 'dot', 'p', 'ph', 'c', 'half'],
  tail: ['p', 'ph', 'c', 'half'],
  modes: ['a', 'go', 'fit', 'm']
};
document.querySelectorAll('[data-set]').forEach(el => {
  el.innerHTML = SETS[el.dataset.set].map(n =>
    `<button class="tb ${GLYPHS[n][0]}" aria-label="${n}"><svg>${GLYPHS[n][1]}</svg></button>`).join('');
});
document.querySelector('.win1 .modes .tb:last-child').classList.add('dark');

const R = Math.round;
const rect = (x, y, w, h, fill, stroke) => {
  x = R(x); y = R(y); w = R(w); h = R(h);
  return stroke ? `<rect x="${x + .5}" y="${y + .5}" width="${w - 1}" height="${h - 1}" fill="${fill}" stroke="${stroke}"/>`
    : `<rect x="${x}" y="${y}" width="${w}" height="${h}" fill="${fill}"/>`;
};
const text = (x, y, s, o = {}) =>
  `<text x="${x}" y="${R(y + (o.size || 12) * .36)}" font-size="${o.size || 12}" fill="${o.fill || '#000'}" text-anchor="${o.anchor || 'start'}" ${o.bold ? 'font-weight="700"' : ''} ${o.wide ? 'font-family="DejaVu Sans"' : ''} ${o.extra || ''}>${s}</text>`;
const dash = (x1, y1, x2, y2) =>
  `<path d="M${R(x1) + .5} ${R(y1) + .5}L${R(x2) + .5} ${R(y2) + .5}" stroke="#000" stroke-dasharray="4 3"/>`;
const badge = (x, y, w, h, s, fill = '#808080', size = 12) =>
  rect(x, y, w, h, fill, '#f4f4f4') + text(x + w - 3, y + h / 2, s, { anchor: 'end', fill: '#fff', size });
const priceTag = (x, y, s) =>
  `<path d="M${x} ${y}l12-8h62v17h-62z" fill="#808080"/>` + text(x + 70, y, s, { anchor: 'end', fill: '#fff', size: 13, wide: true });
const marker = x => `<path d="M${x - 5} 107h10v2l-5 4-5-4z"/>`;
const mount = (id, x, y, body) => { document.getElementById(id).innerHTML = `<g transform="translate(${-x} ${-y})">${body}</g>`; };
const clock = (x, y, s, anchor) => text(x, y, s, { size: 11, bold: true, fill: '#414c5c', anchor });

// Chart 1: volume clusters.
{
  const y0 = 313.5, step = 21.45, cy = k => y0 + k * step;
  let s = '';
  [[106, 41], [89], [148], [126, 119], [154], [130, 120], [228], [180], [163]].forEach(([w, d], i) => {
    s += rect(10, cy(i - 8) - 9.500, w - 10, 19, '#d9d9d9', '#b0b0b0');
    if (d) s += rect(d, cy(i - 8) - 9, 1, 18, '#b0b0b0');
  });
  [[217], [250], [300], [330], [340], [366], [366], [409], [494, 475], [500], [464, 393], [411, 307], [367, 341], [397], [381, 374], [384, 324], [402], [297, 228], [219], [259], [251], [263, 191]].forEach(([w, d], i) => {
    s += rect(11, cy(i + 1) - 8, w - 11, 17, '#d6d6d6');
    if (d) s += rect(d, cy(i + 1) - 8, 1, 17, '#ccc');
  });
  s += rect(217, 326, 443, 19, '#cfc2b0', '#a08868') + rect(577, 475, 48, 19, '#abd06a', '#6b8e23');
  s += rect(10, 527, 758, 1, '#708090');
  // Cells: number, text colour (g/r), optional fill (b/p). Marks: first row, colour.
  const cols = [
    [-21, 17, ' g, g, g, g, g,7rp', '18p 19p 20p', '', 0, 0],
    [22, 22, '32gb, g', '', 'c', 775, 798],
    [65, 17, '34gb,168gb,105r,185gb,62r,118g', '20g', 'c', 711, 794],
    [108, 10, '72gb,192g,95r,41g,128rp,78r,37g,75gb,16g,2g', '12g 13p 17g 18g', 'c', 518, 730],
    [151, 5, '74r,37g,69gb,271g,161g,140g', '6g 8g', 'c', 412, 537],
    [194, 2, '17g,249r,273g,118g,68g,6r', '2p 4g 6g', 'c', 369, 452],
    [237, 1, '67gb,232g,199g,203r,63g', '', 'r', 369, 431],
    [280, 0, '22g,135g,102g,296g,321r,12g', '4g', 'c', 369, 431],
    [323, 2, '6g,128gb,182r,398g,160rp', '', 'r', 369, 431],
    [366, 3, '38gb,28g,218g,125r,180r,233r,23r', '3g 4p 8g', 'c', 369, 431],
    [409, 2, '61g,90gb,119r,272r,181r,138r,1r', '4p 7g', 'r', 369, 452],
    [451, 3, '5g,85g,251g,420g,60rp,19r', '3p 6g', 'c', 412, 452],
    [494, 5, '79r,91g,190rp,66r,93rp,222r,127r,6r', '9p 11g', 'r', 412, 537],
    [537, 7, '3g,131g,123r,123gb,87g,198g,223r,17r', '7p 13g', 'c', 518, 557],
    [580, 10, '37r,313g,336g,130r,44rp', '10p', 'r', 518, 580],
    [623, 7, '1g,188gb,110r,144r,31r,68g', '7p', 'c', 518, 580]
  ];
  let cells = '';
  cols.forEach(([x, k, list, marks, strip, a, b]) => {
    const rows = list.split(',');
    cells += rect(x, cy(k) - 10.500, 41, rows.length * step + (k + rows.length > 22 ? 20 : 0), '#fff', '#000');
    rows.forEach((r, i) => {
      const m = r.match(/^(.*?)([gr])([bp]?)$/), y = cy(k + i);
      if (m[3]) cells += rect(x + 1, y - 9.500, 39, 19, m[3] === 'b' ? '#a3c9da' : '#c9c4e4');
      cells += text(x + (x < 0 ? 32 : 20), y, m[1], { size: 16, anchor: 'middle', fill: m[2] === 'g' ? '#003c00' : '#501010', extra: `stroke="${m[2] === 'g' ? '#003c00' : '#501010'}" stroke-width=".5"` });
    });
    if (a) cells += rect(x - 2, a, 3, b - a, strip === 'c' ? '#00ced1' : '#dc143c');
    marks.split(' ').filter(Boolean).forEach(m => {
      const g = m.endsWith('g');
      cells += rect(x - 1, cy(parseInt(m)), 41, step + 1, g ? 'rgba(0,110,0,.2)' : 'rgba(255,70,70,.36)', g ? '#008000' : '#cd5c5c');
    });
  });
  s += `<clipPath id="plot1"><rect x="10" y="107" width="752" height="691"/></clipPath><g clip-path="url(#plot1)">${cells}</g>`;
  s += rect(384, 483, 378, 3, '#f00') + rect(384, 483, 42, 3, '#900000');
  s += rect(762, 107, 1, 714, '#000');
  for (let i = 0; i < 16; i++) {
    const y = 141 + i * 42.930;
    s += rect(762, y, 13, 1, '#000') + rect(763, y + 21, 5, 1, '#b5b5b5');
    if (i !== 8 && i !== 9) s += text(837, y, `${4381 - i}.00`, { anchor: 'end' });
  }
  s += rect(763, 484, 14, 1, '#eee') + badge(777, 477, 61, 16, '4373.00', '#f00') + priceTag(768, 527, '4372.25');
  s += clock(669, 540, '12:35:21') + clock(669, 553, '217');
  s += rect(10, 822, 832, 1, '#000') + rect(10, 843, 832, 1, '#000') + marker(662);
  ['07:02', '07:05', '07:06', '07:08', '07:13', '07:19', '07:27'].forEach((t, i) => s += text(19 + i * 90, 853, t, { size: 11 }));
  s += rect(600, 845, 60, 16, 'none', '#000') + text(833, 854, '2021.10.11 07:32:30', { anchor: 'end', size: 13 });
  s += '<g fill="none" stroke-width="2" shape-rendering="auto"><path d="M15 802q1 5 5 6l8 8" stroke="#d8a818"/><path d="M27 802l-11 13M24 802q0 4 5 3M14 813q4 0 4 4" stroke="#888"/></g>';
  mount('chart1', 10, 107, s);
}

// Candles as [high, top, bottom, low, up]; values are on the sheet grid of the chart.
const candles = (list, X, Y, w) => list.map(([h, t, b, l, up], i) => {
  const x = R(X(i));
  return rect(x, Y(h), 1, Y(l) - Y(h), '#000') + (t === b ? rect(x - 4, Y(t), 9, 1, '#000')
    : rect(x - (w >> 1), Y(t), w, Math.max(3, Y(b) - Y(t) + 1), up ? '#46d246' : '#dc1414', '#000'));
}).join('');
const disc = (x, y, r, fill, stroke = 'none') => `<circle cx="${x}" cy="${y}" r="${r}" fill="${fill}" stroke="${stroke}" shape-rendering="auto"/>`;

// Chart 2.
{
  const U = v => 850 + v / 2.412, Y = v => 100 + v / 2.751;
  let s = '';
  const outlined = (from, list) => list.forEach((w, i) => s += rect(853, Y(from + i * 16.420) - 1, U(w) - 853, 3, '#ddd', '#b0b0b0'));
  outlined(95, [45, 54, 30, 37, 33, 74, 71, 100, 76, 107, 71, 64, 86, 122, 110, 269, 195, 200, 190, 223, 180, 175, 238, 346, 337, 286, 214, 252, 290, 414]);
  [369, 369, 414, 586, 516, 749, 870, 808, 831, 815, 698, 810, 844, 900, 993, 910, 1000, 730, 817, 748, 660, 701, 572, 657, 585, 1022, 560, 500, 480, 480, 500, 548, 500, 505, 495, 490, 480, 463, 412, 440, 430, 470, 421, 370, 433, 470, 370, 370]
    .forEach((w, i) => s += rect(853, Y(587 + i * 16.420), U(w) - 853, 1, '#d9d9d9'));
  outlined(1390, [252, 107, 94, 94, 137, 216, 153, 147, 144, 122, 156, 128]);
  s += rect(979, 312, 349, 3, '#c9b79c', '#a08868') + rect(853, 390, 475, 3, '#9acd32', '#5a8a20') + rect(956, 598, 372, 3, '#c9b79c', '#a08868');
  s += rect(853, 409, 565, 1, '#708090');
  [[211, 339, 8.500, '#eafaf8'], [271, 669, 7.500, '#ff9090'], [331, 851, 6.700, '#e0fafa'], [392, 1028, 9.500, '#f0a0a0'], [452, 1142, 6.300, '#f59c9c'], [512, 1258, 9.700, '#f5b4b4'], [573, 1043, 7.500, '#5fcfd2'], [725, 1043, 5.500, '#d0f6f8'], [813, 1324, 17.500, '#f5b0b0'], [1087, 928, 8.700, '#fff']]
    .forEach(([x, y, r, c]) => s += disc(U(x), Y(y), r, c));
  const g = 1;
  s += candles([
    [421, 471, 504, 522, g], [371, 405, 471, 490, g], [305, 339, 405, 405, g], [339, 339, 438, 438], [355, 405, 422, 422, g], [323, 323, 405, 440, g],
    [143, 306, 339, 375], [289, 323, 405, 405], [405, 405, 669, 737], [669, 669, 851, 866], [751, 851, 851, 930], [817, 851, 851, 897],
    [834, 851, 1028, 1062], [993, 1028, 1109, 1177], [993, 1109, 1142, 1177], [1092, 1142, 1159, 1193], [1175, 1175, 1258, 1424], [1208, 1241, 1307, 1408],
    [1043, 1043, 1307, 1326, g], [1043, 1060, 1225, 1260], [1043, 1077, 1208, 1292, g], [978, 1060, 1077, 1077, g], [993, 1043, 1093, 1110], [1010, 1043, 1109, 1177, g],
    [977, 1043, 1043, 1062], [927, 1027, 1043, 1077, g], [1010, 1027, 1324, 1473], [818, 818, 1324, 1374, g], [553, 636, 834, 866, g], [536, 636, 686, 720],
    [635, 669, 702, 836], [586, 702, 735, 787], [635, 735, 752, 769, g], [652, 669, 735, 802, g], [685, 685, 865, 897], [767, 865, 928, 995],
    [834, 865, 928, 978, g], [767, 851, 865, 880, g]], i => 862 + i * 12.516, Y, 9);
  s += dash(922, 107, 922, 821) + dash(853, 664, 1412, 664);
  s += rect(1411, 107, 1, 714, '#000');
  let labels = '';
  for (let p = 4386; p >= 4359; p--) {
    const y = 128 + (4384 - p) * 23.820;
    labels += rect(1411, y, 13, 1, '#000');
    for (let q = 1; q < 4; q++) labels += rect(1412, y + q * 5.950, 5, 1, '#b5b5b5');
    labels += text(1486, y, `${p}.00`, { anchor: 'end' });
  }
  s += `<clipPath id="plot2"><rect x="853" y="107" width="640" height="615"/></clipPath><g clip-path="url(#plot2)">${labels}</g>`;
  s += priceTag(1417, 409, '4372.25') + badge(1426, 656, 63, 16, '4361.50');
  s += clock(1387, 422, '12:35:21', 'end') + clock(1388, 435, '00:39', 'end');
  s += rect(853, 722, 640, 1, '#000') + rect(1296, 784, 9, 35, '#006400') + rect(1308, 797, 9, 22, '#9a0000') + rect(1321, 806, 9, 13, '#006400');
  s += rect(1412, 806, 13, 1, '#eee') + badge(1426, 799, 52, 16, '422', '#808080', 11);
  s += rect(853, 822, 640, 1, '#000') + rect(853, 843, 640, 1, '#000') + marker(1331);
  s += rect(1190, 845, 140, 16, 'none', '#000') + text(1481, 854, '2021.10.11 07:33:03', { anchor: 'end', size: 13 });
  mount('chart2', 853, 107, s);
}

// Chart 3.
{
  const U = v => 1490 + v / 3, Y = v => 100 + v / 2.063, g = 1;
  let s = '';
  [[224, 27, 300, '#a08868'], [321, 27, 300, '#6b8e23'], [582, 435, 783, '#a08868'], [634, 340, 660, '#6b8e23'], [772, 411, 783, '#a08868'], [647, 27, 1035, '#708090']]
    .forEach(([y, a, b, c]) => s += rect(U(a), Y(y) - 1, (b - a) / 3, 1, c));
  const lines = (from, list) => list.forEach((w, i) => s += rect(U(309), 2 * R(Y(from) / 2) + i * 2, w, 1, '#b3b3b3'));
  lines(394, [2, 3, 3, 2, 3, 5, 5, 4, 15, 6, 8, 7, 8, 9, 10, 8, 9, 9, 8, 7, 7, 9, 8, 7, 12, 8, 14, 12, 10, 11, 20, 36, 30, 27, 25, 22, 21, 28, 33, 47, 42, 40, 42, 36, 30, 56]);
  lines(776, [30, 14, 16, 18, 28, 30, 28, 26, 22, 25, 28, 26, 24, 29, 33, 36, 32, 30, 36, 43, 36, 40, 33, 30, 34, 30, 26, 22, 20, 16, 14, 12, 10, 8, 8, 5, 8, 10, 5, 6, 4, 6, 14, 5, 4, 2]);
  [[-10, 400, 21, 'p0'], [105, 424, 30, 'c'], [175, 264, 30, 'c'], [248, 480, 30, 'p0'], [316, 616, 30, 'p'], [388, 867, 30, 'p'], [481, 643, 25, 'c'], [550, 624, 16, 'c'], [433, 712, 23, 'c'], [646, 575, 14.500, 'p0'], [739, 667, 30, 'w'], [691, 721, 27, 'p']]
    .forEach(([x, y, r, c]) => s += disc(U(x), Y(y), r, { c: 'rgba(218,245,246,.93)', p0: '#fdeaea', p: 'rgba(255,176,176,.82)', w: '#fafeff' }[c], c === 'c' ? '#cdf6f8' : 'none'));
  const bars = [
    [223, 292, 333, 408, g], [279, 296, 395, 424], [347, 391, 476, 485], [342, 424, 476, 489, g], [383, 424, 540, 584], [435, 449, 544, 571, g], [256, 264, 449, 460, g], [239, 264, 333, 352],
    [268, 313, 335, 357, g], [307, 317, 480, 535], [466, 476, 552, 575], [487, 514, 552, 557, g], [394, 499, 616, 664], [602, 616, 696, 718], [658, 692, 748, 786], [725, 744, 868, 966],
    [784, 793, 868, 914, g], [675, 712, 789, 797, g], [611, 650, 712, 712, g], [547, 643, 648, 668, g], [577, 619, 647, 664, g], [602, 619, 680, 685], [611, 624, 680, 741, g], [619, 626, 647, 677],
    [611, 643, 648, 668, g], [556, 583, 643, 647, g], [514, 575, 583, 608, g], [514, 519, 571, 584, g], [475, 515, 721, 730], [664, 688, 724, 786, g], [570, 667, 688, 797, g], [625, 647, 667, 681, g]];
  const X = i => 1501 + i * 7.840;
  s += candles(bars, X, Y, 5);
  [48, 32, 35, 40, 40, 25, 34, 23, 28, 93, 32, 4, 7, 4, 5, 7, 6, 5, 5, 5, 4, 4, 4, 2, 2, 2, 4, 2, 5, 6, 9, 2].forEach((h, i) => {
    const red = [1, 2, 4, 7, 9, 10, 12, 13, 14, 15, 21, 26, 28].includes(i);
    s += rect(R(X(i)) - 2, 819 - Math.max(1, R(h / 2.063)), 5, Math.max(1, h / 2.063), red ? '#9a0000' : '#006400');
  });
  s += dash(1519, 107, 1519, 821) + dash(1499, 615, 1828, 615) + rect(1828, 107, 1, 714, '#000');
  let labels = '';
  for (let p = 4413; p >= 4327; p--) {
    const y = 415.500 + (4372 - p) * 7.680;
    labels += rect(1828, y, 13, 1, '#000') + rect(1829, y + 4, 5, 1, '#b5b5b5') + text(1903, y, `${p}.00`, { anchor: 'end' });
  }
  s += `<clipPath id="plot3"><rect x="1499" y="107" width="410" height="645"/></clipPath><g clip-path="url(#plot3)">${labels}</g>`;
  s += priceTag(1833, 413, '4372.25') + badge(1843, 607, 64, 16, '4346.00');
  s += clock(1804, 426, '12:35:21', 'end') + clock(1805, 439, '24:39', 'end') + text(1756, 439, '0', { size: 11, fill: '#ccc' });
  s += text(1579, 743, '50&#160; C: 4383.00', { anchor: 'end', size: 13 });
  s += rect(1499, 753, 410, 1, '#000') + rect(1829, 812, 12, 1, '#eee') + badge(1843, 804, 52, 16, '1154', '#808080', 11);
  s += rect(1499, 822, 410, 1, '#000') + rect(1499, 843, 410, 1, '#000') + marker(1748);
  s += badge(1480, 825, 101, 16, '2021.10.08 16:00:00', '#808080', 13);
  s += text(1556, 853, '19:30', { size: 11 }) + rect(1609, 845, 138, 16, 'none', '#000') + text(1646, 853, '02:00', { size: 11 }) + text(1898, 854, '2021.10.11 07:30:00', { anchor: 'end', size: 13 });
  mount('chart3', 1499, 107, s);
}
```
